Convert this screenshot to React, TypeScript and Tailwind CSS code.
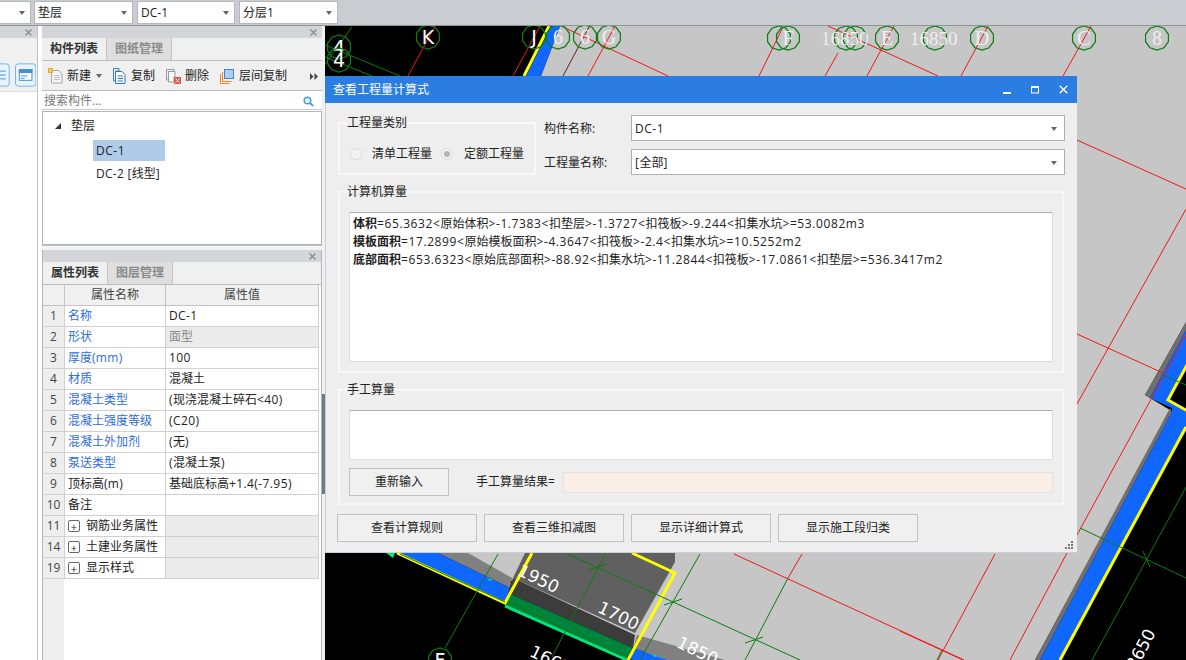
import type { ReactNode } from 'react';

const FONT = "font-['Open_Sans','Noto_Sans_CJK_SC',sans-serif]";

// property rows of the list panel
const ROWS: { no: string; name: string; value?: string; blue?: boolean; grayValue?: boolean; group?: boolean }[] = [
  { no: '1', name: '名称', value: 'DC-1', blue: true },
  { no: '2', name: '形状', value: '面型', blue: true, grayValue: true },
  { no: '3', name: '厚度(mm)', value: '100', blue: true },
  { no: '4', name: '材质', value: '混凝土', blue: true },
  { no: '5', name: '混凝土类型', value: '(现浇混凝土碎石<40)', blue: true },
  { no: '6', name: '混凝土强度等级', value: '(C20)', blue: true },
  { no: '7', name: '混凝土外加剂', value: '(无)', blue: true },
  { no: '8', name: '泵送类型', value: '(混凝土泵)', blue: true },
  { no: '9', name: '顶标高(m)', value: '基础底标高+1.4(-7.95)' },
  { no: '10', name: '备注' },
  { no: '11', name: '钢筋业务属性', group: true },
  { no: '14', name: '土建业务属性', group: true },
  { no: '19', name: '显示样式', group: true },
];

// latin runs are a bit wider in the original font, so space them out
const Spaced = ({ text, className }: { text: string; className: string }) => (
  <>
    {text.split(/([\x00-\x7f]+)/).map((part, i) =>
      i % 2 === 1 ? <span key={i} className={className}>{part}</span> : part,
    )}
  </>
);

const Caret = () => (
  <span className="h-0 w-0 border-x-[3px] border-t-[4px] border-x-transparent border-t-[#666]" />
);

const Combo = ({ label, className }: { label: string; className: string }) => (
  <div className={`flex h-[23px] items-center justify-between border border-[#b5b8bc] bg-white pl-[3px] pr-[5px] text-[12px] text-[#222] ${className}`}>
    <span>{label}</span>
    <Caret />
  </div>
);

const PanelHeader = ({ closeClass = 'pr-[5px]' }: { closeClass?: string }) => (
  <div className={`flex h-[12px] shrink-0 items-center justify-end bg-[#d3d5d9] ${closeClass}`}>
    <svg width="7" height="7" viewBox="0 0 7 7">
      <path d="M0.5 0.5L6.5 6.5M6.5 0.5L0.5 6.5" stroke="#8a8d91" strokeWidth="1.4" />
    </svg>
  </div>
);

const Tabs = ({ active, other }: { active: string; other: string }) => (
  <div className="flex h-[23px] shrink-0 border-b border-[#bcbcbc] bg-[#f0f0f0]">
    <div className="flex w-[65px] items-center justify-center border-r border-[#c4c4c4] text-[12px] font-bold text-[#333]">{active}</div>
    <div className="flex w-[65px] items-center justify-center border-r border-[#c4c4c4] bg-[#dedede] text-[12px] font-bold text-[#8a8a8a]">{other}</div>
  </div>
);

const ToolItem = ({ icon, label, className = 'ml-[11px]' }: { icon: ReactNode; label: string; className?: string }) => (
  <div className={`flex items-center text-[12px] text-[#222] ${className}`}>
    {icon}
    <span>{label}</span>
  </div>
);

const NewIcon = () => (
  <svg width="15" height="16" viewBox="0 0 15 16" className="mr-[4px]">
    <path d="M3.5 2.5H10.5L14 6V15H3.5Z" fill="#f6f6f6" stroke="#a8a8a8" />
    <path d="M6 7.5H12M6 9.5H12M6 11.5H12" stroke="#c0c0c0" />
    <rect x="0" y="0" width="5" height="5" fill="#f6a623" />
    <rect x="1.5" y="1.5" width="2" height="2" fill="#ffe9b8" />
  </svg>
);

const CopyIcon = () => (
  <svg width="13" height="16" viewBox="0 0 13 16" className="mr-[5px]">
    <path d="M0.5 0.5H6V3H2.5V13H0.5Z" fill="#e8f1fb" stroke="#3f7fc4" />
    <path d="M2.5 3.5H9L12 6.5V15.5H2.5Z" fill="#fff" stroke="#2f74c0" />
    <path d="M4.5 8H10M4.5 10.5H10M4.5 13H10" stroke="#2f74c0" />
  </svg>
);

const DeleteIcon = () => (
  <svg width="15" height="15" viewBox="0 0 15 15" className="mr-[4px]">
    <path d="M0.5 0.5H8V2.5H2.5V11H0.5Z" fill="#eee" stroke="#9a9a9a" />
    <path d="M2.5 2.5H9V8H8V13H2.5Z" fill="#f7f7f7" stroke="#9a9a9a" />
    <rect x="8" y="8" width="7" height="7" fill="#e2574c" />
    <path d="M9.5 9.5L13.5 13.5M13.5 9.5L9.5 13.5" stroke="#fff" />
  </svg>
);

const FloorCopyIcon = () => (
  <svg width="14" height="15" viewBox="0 0 14 15" className="mr-[5px]">
    <path d="M0.5 5V14.5H9.5" fill="none" stroke="#f58220" />
    <path d="M2.5 3V12.5H11.5" fill="none" stroke="#f58220" />
    <rect x="4.5" y="0.5" width="9" height="9" fill="#aecdf3" stroke="#3f85d6" />
  </svg>
);

const SearchIcon = () => (
  <svg width="11" height="11" viewBox="0 0 11 11">
    <circle cx="4.5" cy="4.5" r="3.3" fill="#dff0fa" stroke="#45a0d8" strokeWidth="1.5" />
    <path d="M7 7L10.2 10.2" stroke="#45a0d8" strokeWidth="1.8" />
  </svg>
);

// left, cut-off panel
const SidePanel = () => (
  <div className="flex w-[38px] shrink-0 flex-col border-r border-[#c2c2c2] bg-white">
    <PanelHeader closeClass="pr-[5px]" />
    <div className="flex h-[54px] shrink-0 items-end justify-end gap-[5px] border-b border-[#dcdcdc] bg-[#f0f0f0] pb-[4px] pr-[1px]">
      <svg width="10" height="24" viewBox="0 0 10 24">
        <path d="M-4 0.5H6.5A3 3 0 0 1 9.5 3.5V20.5A3 3 0 0 1 6.5 23.5H-4" fill="#eaf4fe" stroke="#6cb2f2" />
        <path d="M0 8H6M0 12H6M0 16H6" stroke="#3f90dc" />
      </svg>
      <svg width="22" height="24" viewBox="0 0 22 24">
        <rect x="0.5" y="0.5" width="21" height="23" rx="3" fill="#eaf4fe" stroke="#6cb2f2" />
        <rect x="4.5" y="6.5" width="13" height="11" fill="#fff" stroke="#3f90dc" />
        <rect x="4" y="6" width="14" height="4" fill="#3f90dc" />
        <path d="M6 13H13M6 15.5H10" stroke="#3f90dc" />
      </svg>
    </div>
  </div>
);

const ListPanel = () => (
  <div className="flex h-[219px] shrink-0 flex-col">
    <PanelHeader />
    <Tabs active="构件列表" other="图纸管理" />
    <div className="flex h-[30px] shrink-0 items-center border-b border-[#bcbcbc] bg-[#f0f0f0] pl-[6px] pt-[1px]">
      <ToolItem icon={<NewIcon />} label="新建" className="" />
      <div className="ml-[5px] flex">
        <Caret />
      </div>
      <ToolItem icon={<CopyIcon />} label="复制" />
      <ToolItem icon={<DeleteIcon />} label="删除" />
      <ToolItem icon={<FloorCopyIcon />} label="层间复制" />
      <svg width="8" height="7" viewBox="0 0 8 7" className="ml-[23px]">
        <path d="M0 0L3.5 3.5L0 7ZM4.5 0L8 3.5L4.5 7Z" fill="#444" />
      </svg>
    </div>
    <div className="flex h-[19px] shrink-0 items-center justify-between border-b border-[#c8c8c8] bg-white pl-[2px] pr-[8px] pt-[2px] text-[12px] text-[#777]">
      <span>搜索构件...</span>
      <SearchIcon />
    </div>
    <div className="mt-[1px] flex-1 border border-[#b4b4b4] bg-white pl-[12px] pt-[4px] text-[12px] text-[#222]">
      <div className="flex h-[20px] items-center">
        <span className="h-0 w-0 border-b-[6px] border-l-[6px] border-b-[#333] border-l-transparent" />
        <span className="ml-[10px]">垫层</span>
      </div>
      <div className="ml-[38px] mt-[4px] flex h-[21px] w-[72px] items-center bg-[#b0cbea] pl-[3px]">
        <Spaced text="DC-1" className="tracking-[0.5px]" />
      </div>
      <div className="ml-[41px] mt-[3px] flex h-[20px] items-center whitespace-pre">
        <div><Spaced text="DC-2 [线型]" className="tracking-[0.3px]" /></div>
      </div>
    </div>
  </div>
);

const PropertyPanel = () => (
  <div className="flex min-h-0 flex-1 flex-col border-x border-[#b4b4b4]">
    <PanelHeader />
    <Tabs active="属性列表" other="图层管理" />
    <div className="flex min-h-0 flex-1 flex-col bg-[linear-gradient(to_right,#eeeeee_21px,#ffffff_21px)] text-[12px] text-[#222]">
      <div className="grid h-[21px] w-[276px] shrink-0 grid-cols-[22px_101px_153px] border-b border-[#c4c4c4] bg-[#f0f0f0] text-[#444]">
        <div className="border-r border-[#c4c4c4]" />
        <div className="flex items-center justify-center border-r border-[#c4c4c4]">属性名称</div>
        <div className="flex items-center justify-center border-r border-[#c4c4c4]">属性值</div>
      </div>
      {ROWS.map((row) => (
        <div key={row.no} className="grid h-[21px] w-[276px] shrink-0 grid-cols-[22px_101px_153px] border-b border-[#d0d0d0]">
          <div className="flex items-center justify-center border-r border-[#d0d0d0] bg-[#eeeeee] text-[#444]">{row.no}</div>
          <div className={`flex items-center border-r border-[#d0d0d0] bg-white pl-[3px] ${row.blue ? 'text-[#2f6be0]' : ''}`}>
            {row.group && (
              <span className="mr-[6px] flex h-[12px] w-[12px] items-center justify-center rounded-[2px] border border-[#666] text-[11px] leading-none">+</span>
            )}
            <div><Spaced text={row.name} className="tracking-[0.3px]" /></div>
          </div>
          <div className={`flex items-center border-r border-[#d0d0d0] pl-[3px] ${row.grayValue || row.group ? 'bg-[#ebebeb]' : 'bg-white'} ${row.grayValue ? 'text-[#888]' : ''}`}>
            <div><Spaced text={row.value ?? ''} className="tracking-[0.4px]" /></div>
          </div>
        </div>
      ))}
    </div>
  </div>
);

const Radio = ({ checked }: { checked?: boolean }) => (
  <span className="flex h-[12px] w-[12px] items-center justify-center rounded-full border border-[#dcdcdc] bg-[#f2f2f2]">
    {checked && <span className="h-[6px] w-[6px] rounded-full bg-[#b5b5b5]" />}
  </span>
);

const Select = ({ value }: { value: string }) => (
  <div className="flex h-[26px] w-[434px] items-center justify-between border border-[#b0b0b0] bg-white pl-[3px] pr-[7px] pt-[1px] text-[12px] text-[#222]">
    <span><Spaced text={value} className="tracking-[0.5px]" /></span>
    <Caret />
  </div>
);

const Button = ({ label, className = 'w-[140px]' }: { label: string; className?: string }) => (
  <div className={`flex h-[28px] items-center justify-center border border-[#c2c2c2] bg-[#f0f0f0] text-[12px] text-[#222] ${className}`}>{label}</div>
);

const Formula = ({ title, text }: { title: string; text: string }) => (
  <div>
    <b>{title}</b>
    <Spaced text={text} className="tracking-[0.6px]" />
  </div>
);

const QuantityDialog = () => (
  <div className="absolute left-[325px] top-[76px] flex h-[477px] w-[752px] flex-col border-b border-l border-[#c9d0da] bg-[#eeeeee] text-[12px] text-[#222]">
    <div className="-ml-[1px] flex h-[27px] shrink-0 items-center justify-between bg-[#2b7de1] pl-[8px] pr-[9px] text-white">
      <span>查看工程量计算式</span>
      <div className="flex items-center gap-[20px]">
        <svg width="8" height="8" viewBox="0 0 8 8"><rect y="6" width="8" height="2" fill="#fff" /></svg>
        <svg width="8" height="8" viewBox="0 0 8 8"><rect x="0.5" y="0.5" width="7" height="6.5" fill="none" stroke="#fff" /><rect width="8" height="2" fill="#fff" /></svg>
        <svg width="9" height="9" viewBox="0 0 9 9"><path d="M0.7 0.7L8.3 8.3M8.3 0.7L0.7 8.3" stroke="#fff" strokeWidth="1.3" /></svg>
      </div>
    </div>
    <div className="flex flex-col pl-[12px]">
      <div className="mt-[11px] flex">
        <fieldset className="m-0 h-[61px] w-[198px] border-2 border-[#f8f8f8] p-0">
          <legend className="ml-[7px] p-0 leading-[17px]">工程量类别</legend>
          <div className="ml-[10px] mt-[14px] flex items-center">
            <Radio />
            <span className="ml-[10px]">清单工程量</span>
            <span className="ml-[9px]"><Radio checked /></span>
            <span className="ml-[11px]">定额工程量</span>
          </div>
        </fieldset>
        <div className="ml-[8px] mt-[1px] flex flex-col gap-[8px]">
          <div className="flex items-center">
            <span className="w-[87px] pt-[1px]">构件名称:</span>
            <Select value="DC-1" />
          </div>
          <div className="flex items-center">
            <span className="w-[87px] pt-[1px]">工程量名称:</span>
            <Select value="[全部]" />
          </div>
        </div>
      </div>
      <fieldset className="m-0 mt-[8px] h-[190px] w-[726px] border-2 border-[#f8f8f8] p-0">
        <legend className="ml-[7px] p-0 leading-[17px]">计算机算量</legend>
        <div className="ml-[9px] mt-[12px] h-[150px] w-[704px] border border-t-[#b0b0b0] border-x-[#dddddd] border-b-[#dddddd] bg-white pl-[3px] pt-[2px] leading-[18px]">
          <Formula title="体积" text="=65.3632<原始体积>-1.7383<扣垫层>-1.3727<扣筏板>-9.244<扣集水坑>=53.0082m3" />
          <Formula title="模板面积" text="=17.2899<原始模板面积>-4.3647<扣筏板>-2.4<扣集水坑>=10.5252m2" />
          <Formula title="底部面积" text="=653.6323<原始底部面积>-88.92<扣集水坑>-11.2844<扣筏板>-17.0861<扣垫层>=536.3417m2" />
        </div>
      </fieldset>
      <fieldset className="m-0 mt-[8px] h-[124px] w-[726px] border-2 border-[#f8f8f8] p-0">
        <legend className="ml-[7px] p-0 leading-[17px]">手工算量</legend>
        <div className="ml-[9px] mt-[12px] h-[50px] w-[704px] border border-t-[#b0b0b0] border-x-[#dddddd] border-b-[#dddddd] bg-white" />
        <div className="ml-[9px] mt-[8px] flex items-center">
          <Button label="重新输入" className="w-[100px]" />
          <span className="ml-[27px]">手工算量结果=</span>
          <div className="ml-[8px] h-[21px] w-[490px] border border-[#e2e2e2] bg-[#f9efe6]" />
        </div>
      </fieldset>
      <div className="-ml-[1px] mt-[9px] flex gap-[7px]">
        <Button label="查看计算规则" />
        <Button label="查看三维扣减图" />
        <Button label="显示详细计算式" />
        <Button label="显示施工段归类" />
      </div>
    </div>
    <svg width="9" height="9" viewBox="0 0 9 9" className="absolute bottom-[2px] right-[3px]">
      <path d="M6 0h2v2H6zM3 3h2v2H3zM6 3h2v2H6zM0 6h2v2H0zM3 6h2v2H3zM6 6h2v2H6z" fill="#777" />
    </svg>
  </div>
);

// axis bubble, drawn as a rough polygon like the CAD view does
const Bubble = ({ x, y, label, light }: { x: number; y: number; label?: string; light?: boolean }) => {
  const points = Array.from({ length: 10 }, (_, i) => {
    const a = (Math.PI * 2 * i) / 10 + Math.PI / 10;
    return `${x + 12 * Math.cos(a)},${y + 12 * Math.sin(a)}`;
  }).join(' ');
  return (
    <g>
      <polygon points={points} fill="none" stroke="#0b7d12" strokeWidth="1.2" />
      {label && (
        <text
          x={x}
          y={y + 7}
          textAnchor="middle"
          fontSize={light ? 20 : 19}
          fontFamily={light ? "'Liberation Serif', serif" : "'DejaVu Sans', sans-serif"}
          fill={light ? '#eeeeee' : '#ffffff'}
        >
          {label}
        </text>
      )}
    </g>
  );
};

const RED_LINES = [
  '435,26 408,76', '540,26 513,76', '615,26 588,76', '563,27 668,76', '783,27 759,76', '838,53 825,76',
  '894,26 867,76', '988,26 961,76', '1091,26 1063,76', '828,26 938,76', '1077,140 1186,189',
  '1077,334 1163,373', '1186,209 1077,404', '1186,335 1077,535', '1067,553 1010,660', '995,554 938,660',
  '900,631 963,660', '734,554 964,660', '802,554 788,578',
];

const GREEN_LINES = [
  '352,27 325,64', '325,45 400,76', '325,57 372,76', '498,554 445,648', '568,554 800,660', '605,554 552,657',
  '700,554 640,660', '788,578 745,660', '508,602 627,658', '1080,528 1186,578', '1186,487 1092,660',
  '1163,375 1186,385', '942,650 937,660', '400,554 505,602',
];

const CadCanvas = () => (
  <svg viewBox="325 26 861 634" className="block h-[634px] w-[861px] shrink-0 bg-black">
    <polygon points="560,26 1186,26 1186,322 1145,395 1170,410 1035,660 660,660 460,553 541,76" fill="#c6c6c6" />
    <polygon points="1186,322 1145,395 1150,398 1186,330" fill="#707070" />
    <polygon points="1170,408 1172,412 1040,660 1035,660" fill="#707070" />
    <polygon points="1186,330 1150,398 1172,408 1172,412 1040,660 1060,660 1186,427" fill="#0f67ff" />
    <polygon points="1200,341 1168,400 1200,418" fill="#000" stroke="#ffff00" strokeWidth="3" />
    <line x1="1060" y1="660" x2="1186" y2="427" stroke="#ffff00" strokeWidth="3" />
    <polygon points="551,26 560,26 541,76 526,76" fill="#0f67ff" />
    <line x1="549" y1="26" x2="524" y2="76" stroke="#ffff00" strokeWidth="3" />

    <polygon points="438,553 468,553 512,578 510,588" fill="#808080" />
    <polygon points="400,553 438,553 510,588 505,603" fill="#0f67ff" />
    <polygon points="637,635 725,660 668,660 633,648" fill="#808080" />
    <polygon points="628,659 633,648 668,660 634,660" fill="#0f67ff" />
    <polygon points="525,553 675,553 675,562 635,633 513,578" fill="#606060" />
    <polygon points="513,578 635,635 633,648 508,593" fill="#3c3c3c" />
    <polygon points="508,593 633,648 627,659 505,605" fill="#00843c" />
    <line x1="505" y1="606" x2="627" y2="660" stroke="#00e67c" strokeWidth="3" />
    <polyline points="397,553 505,603 532,553" fill="none" stroke="#ffff00" strokeWidth="3" />
    <polyline points="632,553 675,573 628,660" fill="none" stroke="#ffff00" strokeWidth="3" strokeLinejoin="round" />
    <polygon points="386,553 395,553 393,558" fill="#00e67c" />
    <polygon points="487,578 493,580 490,581" fill="#00e67c" />
    <polygon points="652,654 658,656 654,657" fill="#00e67c" />

    {RED_LINES.map((p) => <polyline key={p} points={p} fill="none" stroke="#f01818" strokeWidth="1" />)}
    <line x1="589" y1="27" x2="563" y2="76" stroke="#6b1a1a" strokeWidth="1" />
    {GREEN_LINES.map((p) => <polyline key={p} points={p} fill="none" stroke="#0b7d12" strokeWidth="1" />)}
    <path d="M589 570L607 564M664 605L682 599M745 643L763 637M1143 551L1150 567" stroke="#0b7d12" fill="none" />

    <Bubble x={339} y={47} label="4" />
    <Bubble x={339} y={60} label="4" />
    <Bubble x={428} y={37} label="K" />
    <Bubble x={534} y={37} label="J" />
    <Bubble x={558} y={37} label="6" light />
    <Bubble x={585} y={37} label="6" light />
    <Bubble x={609} y={37} label="G" light />
    <Bubble x={779} y={38} />
    <Bubble x={788} y={38} label="F" light />
    <Bubble x={846} y={38} />
    <Bubble x={855} y={38} />
    <Bubble x={887} y={38} label="E" light />
    <Bubble x={935} y={38} />
    <Bubble x={982} y={38} label="D" light />
    <Bubble x={1084} y={38} label="C" light />
    <Bubble x={1157} y={38} label="8" light />
    <Bubble x={440} y={660} label="F" />

    <g fontFamily="'Liberation Serif', serif" fill="#eeeeee" fontSize="19">
      <text x="821" y="45">16850</text>
      <text x="910" y="45">16850</text>
    </g>
    <g fontFamily="'DejaVu Sans', sans-serif" fill="#ffffff" fontSize="17" textAnchor="middle">
      <text transform="translate(536 584) rotate(26)">1950</text>
      <text transform="translate(616 621) rotate(26)">1700</text>
      <text transform="translate(548 665) rotate(26)">1665</text>
      <text transform="translate(695 656) rotate(26)">1850</text>
      <text transform="translate(1146 652) rotate(-62)">8650</text>
    </g>
  </svg>
);

export default function App() {
  return (
    <div className={`relative flex h-[660px] w-[1186px] flex-col overflow-hidden bg-white ${FONT}`}>
      <div className="flex h-[26px] shrink-0 gap-[4px] border-b border-[#909499] bg-[#c9cdd2] pt-[1px]">
        <Combo label="" className="-ml-[1px] w-[32px]" />
        <Combo label="垫层" className="-ml-[1px] w-[99px]" />
        <Combo label="DC-1" className="w-[98px]" />
        <Combo label="分层1" className="w-[99px]" />
      </div>
      <div className="flex min-h-0 flex-1">
        <SidePanel />
        <div className="w-[4px] shrink-0 bg-white" />
        <div className="flex w-[280px] shrink-0 flex-col">
          <ListPanel />
          <div className="h-[5px] shrink-0 border-t border-[#c0c0c0] bg-[#f4f4f4]" />
          <PropertyPanel />
        </div>
        <div className="w-[3px] shrink-0 bg-[#f0f0f0] pt-[368px]">
          <div className="h-[100px] w-[3px] bg-[#6e7a88]" />
        </div>
        <CadCanvas />
      </div>
      <QuantityDialog />
    </div>
  );
}
